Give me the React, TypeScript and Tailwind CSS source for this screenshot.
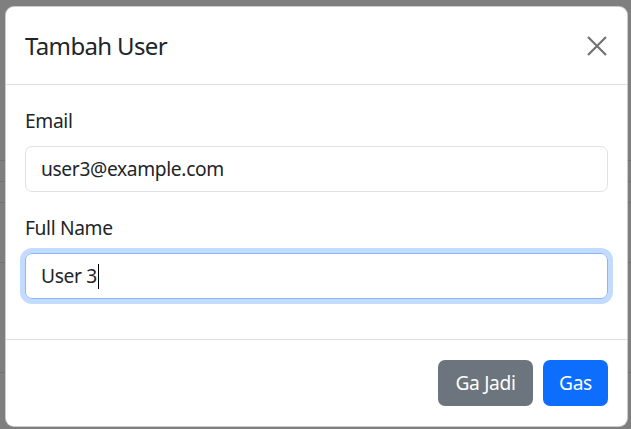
import React from "react";

const font = { fontFamily: '"Noto Sans", "Open Sans", sans-serif' };

function BackgroundRows() {
  return (
    <div className="flex flex-col w-full">
      <div className="h-[161px] border-b border-[#6f7173]" />
      <div className="h-[21px] border-b border-[#6f7173]" />
      <div className="h-[21px] border-b border-[#6f7173]" />
      <div className="h-[60px] border-b border-[#6f7173]" />
      <div className="h-[110px] border-b border-[#6f7173]" />
    </div>
  );
}

export default function App() {
  return (
    <div className="relative w-[631px] h-[429px] overflow-hidden bg-[#7f7f7f]" style={font}>
      <BackgroundRows />
      <div className="absolute left-[5px] top-[6px] w-[623px] h-[421px] bg-white border border-black/20 rounded-[9px] flex flex-col text-[#212529] tracking-[-0.35px]">
        <div className="h-[78px] shrink-0 flex items-center justify-between pl-[19px] pr-[20px] border-b border-[#dee2e6]">
          <h5 className="text-[24px] leading-[36px] font-normal tracking-[-0.65px]">Tambah User</h5>
          <button className="w-[20px] h-[20px] flex items-center justify-center" aria-label="Close">
            <svg width="20" height="20" viewBox="0 0 20 20" fill="none" stroke="#717171" strokeWidth="2.2">
              <path d="M1 1 L19 19 M19 1 L1 19" />
            </svg>
          </button>
        </div>
        <div className="h-[255px] shrink-0 px-[19px] pt-[21px] border-b border-[#dee2e6] flex flex-col">
          <label className="text-[19.2px] leading-[29px] mb-[11px]">Email</label>
          <div className="h-[46px] rounded-[7px] border border-[#dee2e6] flex items-center px-[15px] text-[19.2px] mb-[21px]">
            user3@example.com
          </div>
          <label className="text-[19.2px] leading-[29px] mb-[11px]">Full Name</label>
          <div className="h-[46px] rounded-[7px] border border-[#86b7fe] shadow-[0_0_0_5px_#c2dbfe] flex items-center px-[15px] text-[19.2px]">
            <span>User 3</span>
            <span className="inline-block w-px h-[25px] bg-black ml-[1px]" />
          </div>
        </div>
        <div className="flex-1 flex items-center justify-end gap-[10px] pr-[19px]">
          <button className="w-[95px] h-[46px] rounded-[7px] bg-[#6c757d] text-white text-[19.2px]">Ga Jadi</button>
          <button className="w-[65px] h-[46px] rounded-[7px] bg-[#0d6efd] text-white text-[19.2px]">Gas</button>
        </div>
      </div>
    </div>
  );
}
